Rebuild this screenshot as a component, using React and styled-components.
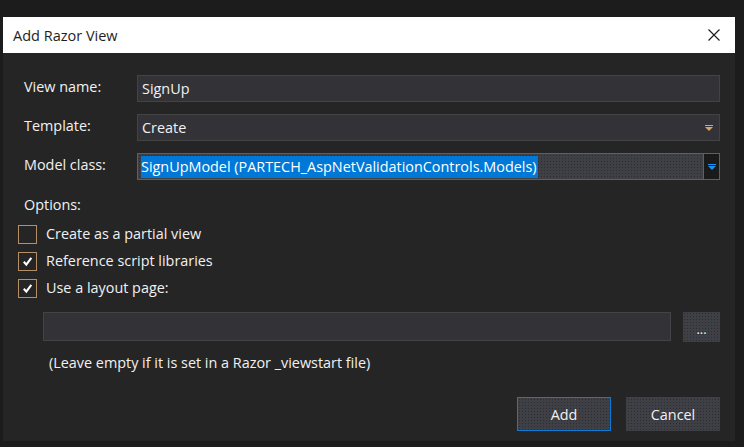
import React from "react";
import styled, { createGlobalStyle } from "styled-components";

const GlobalStyle = createGlobalStyle`
  html, body {
    margin: 0;
    padding: 0;
    background: #1c1c1c;
  }
  body {
    font-family: "Open Sans", "Noto Sans", "Liberation Sans", sans-serif;
  }
`;

const dots = `
  background-image: radial-gradient(rgba(0, 0, 0, 0.3) 0.6px, transparent 0.8px);
  background-size: 3px 3px;
`;

function CheckIcon() {
  return (
    <svg width="11" height="11" viewBox="0 0 11 11">
      <path d="M1.8 5.8 L4.3 8.6 L9.3 1.8" fill="none" stroke="#ffffff" strokeWidth="2.1" />
    </svg>
  );
}

function Caret({ color }) {
  return (
    <svg width="8" height="6" viewBox="0 0 8 6">
      <rect x="0" y="0" width="8" height="1" fill={color} />
      <path d="M0 2 L8 2 L4 6 Z" fill={color} />
    </svg>
  );
}

function CheckRow({ checked, label }) {
  return (
    <Row>
      <Box>{checked && <CheckIcon />}</Box>
      <CheckLabel>{label}</CheckLabel>
    </Row>
  );
}

export default function App() {
  return (
    <>
      <GlobalStyle />
      <Dialog>
        <TitleBar>
          <Title>Add Razor View</Title>
          <Close>
            <svg width="12" height="12" viewBox="0 0 12 12">
              <path d="M0.5 0.5 L11.5 11.5 M11.5 0.5 L0.5 11.5" stroke="#1e1e1e" strokeWidth="1.2" />
            </svg>
          </Close>
        </TitleBar>
        <Body>
          <Fields>
            <Label>View name:</Label>
            <TextBox>SignUp</TextBox>
            <Label>Template:</Label>
            <Select>
              <span>Create</span>
              <Caret color="#d7a46a" />
            </Select>
            <Label>Model class:</Label>
            <Combo>
              <ComboText>
                <Selected>SignUpModel (PARTECH_AspNetValidationControls.Models)</Selected>
              </ComboText>
              <ComboButton>
                <Caret color="#1c8ff0" />
              </ComboButton>
            </Combo>
          </Fields>
          <Options>Options:</Options>
          <Checks>
            <CheckRow label="Create as a partial view" />
            <CheckRow checked label="Reference script libraries" />
            <CheckRow checked label="Use a layout page:" />
          </Checks>
          <LayoutRow>
            <PathBox />
            <Browse>...</Browse>
          </LayoutRow>
          <Hint>(Leave empty if it is set in a Razor _viewstart file)</Hint>
          <Footer>
            <Button primary>Add</Button>
            <Button>Cancel</Button>
          </Footer>
        </Body>
      </Dialog>
    </>
  );
}

const Dialog = styled.div`
  margin: 17px 0 0 3px;
  width: 732px;
  height: 424px;
  background: #252526;
  display: flex;
  flex-direction: column;
`;
const TitleBar = styled.div`
  height: 36px;
  background: #ffffff;
  display: flex;
  align-items: center;
  justify-content: space-between;
  padding: 0 15px 0 10px;
`;
const Title = styled.div`
  font-size: 14.5px;
  color: #1e1e1e;
`;
const Close = styled.div`
  display: flex;
  align-items: center;
`;
const Body = styled.div`
  flex: 1;
  padding: 22px 15px 0 15px;
  display: flex;
  flex-direction: column;
  font-size: 14.4px;
  color: #f1f1f1;
`;
const Fields = styled.div`
  display: grid;
  grid-template-columns: 119px 1fr;
  row-gap: 12px;
  align-items: center;
`;
const Label = styled.div`
  padding-left: 6px;
  margin-top: -4px;
`;
const TextBox = styled.div`
  height: 25px;
  background: #333337;
  border: 1px solid #434346;
  display: flex;
  align-items: center;
  padding-left: 4px;
`;
const Select = styled(TextBox)`
  justify-content: space-between;
  padding-right: 6px;
`;
const Combo = styled.div`
  height: 25px;
  border: 1px solid #007acc;
  display: flex;
  background: #3f3f46;
  ${dots}
`;
const ComboText = styled.div`
  flex: 1;
  display: flex;
  align-items: center;
  padding-left: 3px;
`;
const Selected = styled.span`
  background: #0078d7;
  color: #ffffff;
  line-height: 22px;
  padding-right: 1px;
`;
const ComboButton = styled.div`
  width: 15px;
  border-left: 1px solid #007acc;
  background: #1b1b1c;
  ${dots}
  display: flex;
  align-items: center;
  justify-content: center;
`;
const Options = styled.div`
  margin: 15px 0 0 6px;
`;
const Checks = styled.div`
  display: flex;
  flex-direction: column;
  gap: 8px;
  margin-top: 11px;
`;
const Row = styled.div`
  display: flex;
  align-items: center;
  gap: 9px;
`;
const Box = styled.div`
  width: 17px;
  height: 17px;
  border: 1px solid #b59067;
  display: flex;
  align-items: center;
  justify-content: center;
`;
const CheckLabel = styled.span`
  margin-top: -2px;
`;
const LayoutRow = styled.div`
  display: flex;
  gap: 12px;
  margin: 14px 0 0 25px;
`;
const PathBox = styled.div`
  flex: 1;
  height: 27px;
  background: #333337;
  border: 1px solid #434346;
`;
const Browse = styled.div`
  width: 37px;
  height: 30px;
  background: #3f3f46;
  ${dots}
  font-size: 13px;
  display: flex;
  align-items: center;
  justify-content: center;
  padding-top: 3px;
  box-sizing: border-box;
`;
const Hint = styled.div`
  margin: 11px 0 0 31px;
`;
const Footer = styled.div`
  display: flex;
  justify-content: flex-end;
  gap: 15px;
  margin-top: 25px;
`;
const Button = styled.div`
  width: 94px;
  height: 34px;
  box-sizing: border-box;
  background: #3f3f46;
  ${dots}
  border: 1px solid ${(p) => (p.primary ? "#0e7ad8" : "#3f3f46")};
  display: flex;
  align-items: center;
  justify-content: center;
`;
